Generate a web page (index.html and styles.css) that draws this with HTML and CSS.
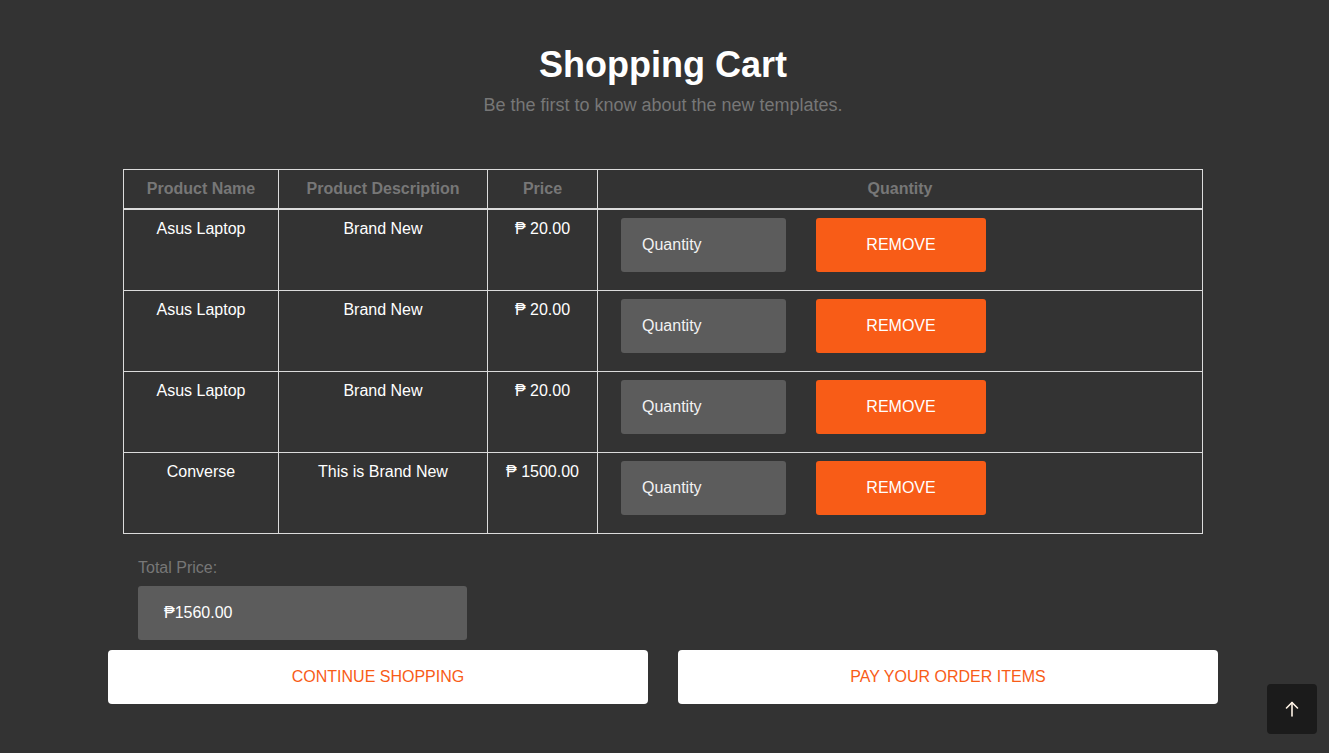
FILE: index.html
```html
<!DOCTYPE html>
<html lang="en">
<head>
<meta charset="utf-8">
<title>Shopping Cart</title>
<link rel="stylesheet" href="styles.css">
</head>
<body>
<main class="container">
  <header class="page-head">
    <h1 class="title">Shopping Cart</h1>
    <p class="subtitle">Be the first to know about the new templates.</p>
  </header>

  <div class="cart-wrap">
    <table class="cart">
      <thead>
        <tr>
          <th class="c-name">Product Name</th>
          <th class="c-desc">Product Description</th>
          <th class="c-price">Price</th>
          <th class="c-qty">Quantity</th>
        </tr>
      </thead>
      <tbody>
        <tr>
          <td>Asus Laptop</td>
          <td>Brand New</td>
          <td>₱ 20.00</td>
          <td class="qty-cell"><div class="qty-row"><input class="qty-input" type="text" placeholder="Quantity"><button class="remove-btn">REMOVE</button></div></td>
        </tr>
        <tr>
          <td>Asus Laptop</td>
          <td>Brand New</td>
          <td>₱ 20.00</td>
          <td class="qty-cell"><div class="qty-row"><input class="qty-input" type="text" placeholder="Quantity"><button class="remove-btn">REMOVE</button></div></td>
        </tr>
        <tr>
          <td>Asus Laptop</td>
          <td>Brand New</td>
          <td>₱ 20.00</td>
          <td class="qty-cell"><div class="qty-row"><input class="qty-input" type="text" placeholder="Quantity"><button class="remove-btn">REMOVE</button></div></td>
        </tr>
        <tr>
          <td>Converse</td>
          <td>This is Brand New</td>
          <td>₱ 1500.00</td>
          <td class="qty-cell"><div class="qty-row"><input class="qty-input" type="text" placeholder="Quantity"><button class="remove-btn">REMOVE</button></div></td>
        </tr>
      </tbody>
    </table>

    <div class="total">
      <label class="total-label">Total Price:</label>
      <div class="total-box">₱1560.00</div>
    </div>
  </div>

  <div class="actions">
    <button class="action-btn">CONTINUE SHOPPING</button>
    <button class="action-btn">PAY YOUR ORDER ITEMS</button>
  </div>
</main>

<a class="to-top" href="#" aria-label="Back to top">
  <svg width="14" height="16" viewBox="0 0 14 16" fill="none" stroke="#fff4e6" stroke-width="1.6" stroke-linecap="round" stroke-linejoin="round">
    <path d="M7 15V1.5"/>
    <path d="M1.5 7L7 1.5L12.5 7"/>
  </svg>
</a>
</body>
</html>
```

FILE: styles.css
```css
* { box-sizing: border-box; }

html, body {
  margin: 0;
  padding: 0;
  background: #333333;
  font-family: "Liberation Sans", Arial, "DejaVu Sans", sans-serif;
  color: #ffffff;
}

body {
  padding-right: 3px;
}

.container {
  width: 1110px;
  margin: 0 auto;
}

.page-head {
  padding-top: 44px;
  text-align: center;
}

.title {
  margin: 0;
  font-size: 36px;
  line-height: 41px;
  font-weight: 700;
  color: #ffffff;
}

.subtitle {
  margin: 10px 0 0;
  font-size: 18px;
  line-height: 21px;
  color: #777777;
}

.cart-wrap {
  padding: 0 15px;
  margin-top: 53px;
}

.cart {
  width: 1080px;
  border-collapse: collapse;
  font-size: 16px;
  line-height: 18px;
}

.cart th,
.cart td {
  border: 1px solid #dcdcdc;
  text-align: center;
  vertical-align: top;
}

.cart th {
  padding: 10px 8px;
  font-weight: 700;
  color: #777777;
  border-bottom-width: 2px;
}

.cart td {
  padding: 10px 8px;
  color: #ffffff;
  height: 81px;
}

.c-name { width: 155px; }
.c-desc { width: 209px; }
.c-price { width: 110px; }

.cart td.qty-cell {
  padding: 8px 8px 18px 23px;
}

.qty-row {
  display: flex;
  gap: 30px;
}

.qty-input {
  width: 165px;
  height: 54px;
  border: none;
  border-radius: 3px;
  background: #5c5c5c;
  color: #ffffff;
  font-family: inherit;
  font-size: 16px;
  padding: 0 21px;
  outline: none;
}

.qty-input::placeholder {
  color: #f2f2f2;
  opacity: 1;
}

.remove-btn {
  width: 170px;
  height: 54px;
  border: none;
  border-radius: 3px;
  background: #f85c17;
  color: #ffffff;
  font-family: inherit;
  font-size: 16px;
  cursor: pointer;
}

.total {
  display: flex;
  flex-direction: column;
  align-items: flex-start;
  padding-left: 15px;
  margin-top: 25px;
}

.total-label {
  font-size: 16px;
  line-height: 18px;
  color: #777777;
}

.total-box {
  margin-top: 9px;
  width: 329px;
  height: 54px;
  border-radius: 3px;
  background: #5c5c5c;
  color: #ffffff;
  font-size: 16px;
  line-height: 54px;
  padding-left: 26px;
}

.actions {
  display: flex;
  gap: 30px;
  margin-top: 10px;
}

.action-btn {
  flex: 1;
  height: 54px;
  border: none;
  border-radius: 4px;
  background: #ffffff;
  color: #f85c17;
  font-family: inherit;
  font-size: 16px;
  cursor: pointer;
}

.to-top {
  position: fixed;
  right: 12px;
  bottom: 19px;
  width: 50px;
  height: 50px;
  border-radius: 4px;
  background: #1b1b1b;
  display: flex;
  align-items: center;
  justify-content: center;
}
```
